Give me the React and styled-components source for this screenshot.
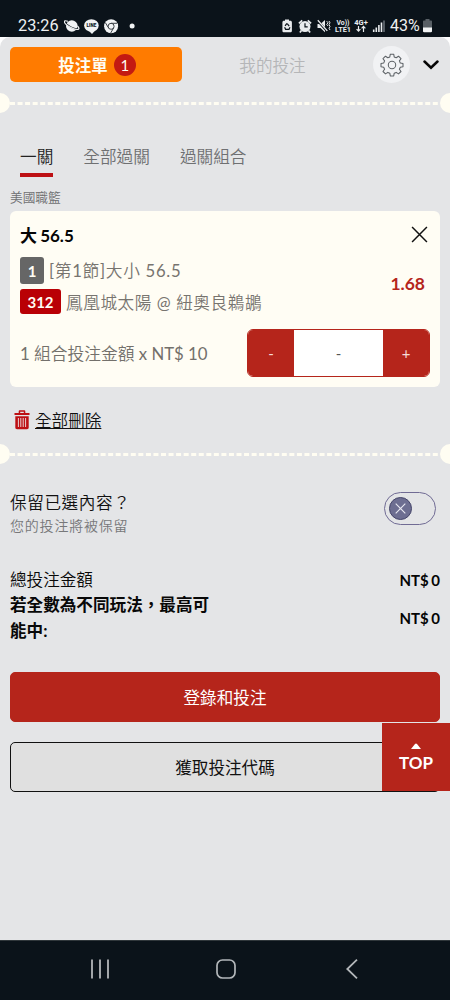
import React, { useState } from "react";
import styled, { createGlobalStyle } from "styled-components";

const tabs = ["一關", "全部過關", "過關組合"];

const totals = [
  { label: "總投注金額", value: "NT$ 0" },
  { label: "若全數為不同玩法，最高可能中:", value: "NT$ 0", bold: true },
];

function StatusIcons() {
  return (
    <svg width="71" height="16" viewBox="0 0 71 16">
      <g fill="#f1f3f4">
        <circle cx="7.8" cy="8" r="5.8" />
        <ellipse cx="27.4" cy="7.5" rx="7.3" ry="6.2" />
        <path d="M24 12l4 4 4-4.5z" />
        <circle cx="47.1" cy="8.3" r="7" />
        <circle cx="68.1" cy="8" r="2.5" />
      </g>
      <path
        d="M1.2 4.2c1.6 3.6 9 7.4 13 6.6"
        fill="none"
        stroke="#0b131a"
        strokeWidth="1.3"
      />
      <path
        d="M3.8 3.4C1.5 2.4.2 2.6.4 4c.5 2.5 9.6 8.2 13.6 7.4 1.5-.3 1-2-.6-3.5"
        fill="none"
        stroke="#f1f3f4"
        strokeWidth="1.2"
      />
      <text
        x="27.4"
        y="9.3"
        fontSize="4.6"
        fontWeight="900"
        textAnchor="middle"
        fill="#0b131a"
      >
        LINE
      </text>
      <g fill="none" stroke="#3c4247" strokeWidth="1">
        <circle cx="47.1" cy="8.3" r="3" />
        <path d="M47 5.3h6M44.4 9.7l-3-5M49.7 9.8l-3 5.2" />
      </g>
    </svg>
  );
}

function SystemIcons() {
  return (
    <svg width="104" height="16" viewBox="0 0 104 16">
      <g fill="#e9ecee">
        <path d="M3 1.4h4v1.4h1.3c1 0 1.6.7 1.6 1.6v8.3c0 1-.7 1.6-1.6 1.6H2c-1 0-1.6-.7-1.6-1.6V4.4C.4 3.5 1 2.8 2 2.8h1z" />
        <circle cx="23" cy="8.5" r="5.5" />
        <path d="M16.9 5.3l3.3-3M29.1 5.3l-3.3-3M19.4 12.4l-1.5 2M26.6 12.4l1.5 2" stroke="#e9ecee" strokeWidth="1.7" />
        <path d="M35.5 6h3l4.5-4v12.2L38.5 10h-3z" />
      </g>
      <path d="M35.8 2.8l9.5 10.7" stroke="#0b131a" strokeWidth="2.4" />
      <path d="M35.8 2.2l9.5 10.7" stroke="#e9ecee" strokeWidth="1.3" />
      <path d="M5.2 5.6l2 2.6M8 9.2l-1 2.1H3.6l-1-2.1M3.1 7.8l1.8-2.5" fill="none" stroke="#0b131a" strokeWidth="1.2" />
      <path d="M23 5.2v3.7h2.7" fill="none" stroke="#0b131a" strokeWidth="1.2" />
      <path d="M44.7 3.2l1.4 1.6-1.4 1.6 1.4 1.6M47 3l1 1.8L47 6.6l1 1.8-1 1.8 1 1.8" fill="none" stroke="#e9ecee" strokeWidth="1" />
      <g fill="#e9ecee" fontWeight="700">
        <text x="54.5" y="6.8" fontSize="7" textLength="13" lengthAdjust="spacingAndGlyphs">Vo))</text>
        <text x="53" y="14" fontSize="7" textLength="16" lengthAdjust="spacingAndGlyphs">LTE1</text>
        <text x="72.3" y="6.8" fontSize="7" textLength="13.5" lengthAdjust="spacingAndGlyphs">4G+</text>
      </g>
      <path d="M76.5 8v5M74.6 11.2l1.9 2 1.9-2M81.5 14V8.5M79.6 10.4l1.9-2 1.9 2" fill="none" stroke="#e9ecee" strokeWidth="1.2" />
      <g stroke="#e9ecee" strokeWidth="1.6">
        <path d="M91.7 14v-2.5M94.3 14V9.5M96.9 14V7M99.5 14V4.5" />
        <path d="M102 14V2.5" stroke="#687077" />
      </g>
    </svg>
  );
}

function BatteryIcon() {
  return (
    <svg width="9" height="14" viewBox="0 0 9 14">
      <path d="M2.5 0h4v1.5H8c.6 0 1 .4 1 1V9H0V2.5c0-.6.4-1 1-1h1.5z" fill="#596066" />
      <path d="M0 8.5h9V12c0 .8-.4 1.2-1 1.2H1c-.6 0-1-.4-1-1.2z" fill="#f1f3f4" />
    </svg>
  );
}

function GearIcon() {
  return (
    <svg width="24" height="24" viewBox="0 0 24 24" fill="none" stroke="#5d6266" strokeWidth="1.05" strokeLinejoin="round">
      <path d="M10.3 1.2h3.4l.5 2.7 2 .9 2.3-1.6L21 5.7l-1.6 2.2.9 2.1 2.7.4v3.3l-2.7.5-.9 2 1.6 2.3-2.5 2.4-2.3-1.5-2 .8-.5 2.7h-3.4l-.5-2.7-2-.8-2.3 1.5L3 18.5l1.6-2.3-.9-2-2.7-.5v-3.3l2.7-.4.9-2.1L3 5.7l2.5-2.5 2.3 1.6 2-.9z" />
      <circle cx="12" cy="12" r="3.7" />
    </svg>
  );
}

function TrashIcon() {
  return (
    <svg width="16" height="20" viewBox="0 0 16 20">
      <path d="M4.7 3V1.2C4.7.6 5.1.3 5.6.3h4.8c.5 0 .9.3.9.9V3h4.2v2H.5V3zM6.2 1.7V3h3.6V1.7z" fill="#bd1014" fillRule="evenodd" />
      <path d="M1.3 6.2h13.4v11.4c0 1-.7 1.7-1.7 1.7H3c-1 0-1.7-.7-1.7-1.7z" fill="#bd1014" />
      <path d="M4.4 8v9M6.8 8v9M9.2 8v9M11.6 8v9" stroke="#e8d2d4" strokeWidth="1" />
    </svg>
  );
}

function CrossIcon({ size, color, width }) {
  return (
    <svg width={size} height={size} viewBox="0 0 16 16">
      <path d="M1 1l14 14M15 1L1 15" stroke={color} strokeWidth={width} />
    </svg>
  );
}

function TicketDivider() {
  return (
    <Divider>
      <Notch />
      <svg width="430" height="3">
        <path d="M0 1.5h430" stroke="#fffdf2" strokeWidth="3" strokeDasharray="5 2.55" />
      </svg>
      <Notch $right />
    </Divider>
  );
}

export default function App() {
  const [activeTab, setActiveTab] = useState(0);

  return (
    <>
      <GlobalStyle />
      <Screen>
        <StatusBar>
          <Clock>23:26</Clock>
          <StatusIcons />
          <SystemGroup>
            <SystemIcons />
            <Percent>43%</Percent>
            <BatteryIcon />
          </SystemGroup>
        </StatusBar>

        <SlipPage>
          <SlipPanel>
            <SlipHeader>
              <SlipTab>
                投注單 <Count>1</Count>
              </SlipTab>
              <MyBets>我的投注</MyBets>
              <GearButton>
                <GearIcon />
              </GearButton>
              <svg width="16" height="10" viewBox="0 0 16 10">
                <path d="M1.5 1.5L8 7.7l6.5-6.2" fill="none" stroke="#050505" strokeWidth="2.5" strokeLinecap="round" />
              </svg>
            </SlipHeader>

            <TicketDivider />

            <Tabs>
              {tabs.map((tab, i) => (
                <Tab key={tab} $active={i === activeTab} onClick={() => setActiveTab(i)}>
                  {tab}
                </Tab>
              ))}
            </Tabs>

            <League>美國職籃</League>
            <BetCard>
              <CardHead>
                <Pick>大 56.5</Pick>
                <CrossIcon size={17} color="#111" width={1.4} />
              </CardHead>
              <CardBody>
                <div>
                  <Line>
                    <Badge>1</Badge>
                    <Market>[第1節]大小 56.5</Market>
                  </Line>
                  <Line $second>
                    <Badge $red>312</Badge>
                    <Teams>鳳凰城太陽 @ 紐奧良鵜鶘</Teams>
                  </Line>
                </div>
                <Odds>1.68</Odds>
              </CardBody>
              <StakeRow>
                <StakeText>1 組合投注金額 x NT$ 10</StakeText>
                <Stepper>
                  <StepButton>-</StepButton>
                  <StepValue>-</StepValue>
                  <StepButton>+</StepButton>
                </Stepper>
              </StakeRow>
            </BetCard>

            <DeleteAll>
              <TrashIcon />
              <span>全部刪除</span>
            </DeleteAll>

            <TicketDivider />

            <KeepRow>
              <div>
                <KeepTitle>保留已選內容？</KeepTitle>
                <KeepHint>您的投注將被保留</KeepHint>
              </div>
              <Toggle>
                <Thumb>
                  <CrossIcon size={11} color="#e9e9f2" width={1.6} />
                </Thumb>
              </Toggle>
            </KeepRow>

            <Totals>
              {totals.map((item) => (
                <TotalRow key={item.label}>
                  <TotalLabel $bold={item.bold}>{item.label}</TotalLabel>
                  <TotalValue>{item.value}</TotalValue>
                </TotalRow>
              ))}
            </Totals>

            <Actions>
              <ActionButton $primary>登錄和投注</ActionButton>
              <ActionButton>獲取投注代碼</ActionButton>
              <TopButton>
                <svg width="10" height="6" viewBox="0 0 10 6">
                  <path d="M0 6l4-5c.6-.8 1.4-.8 2 0l4 5z" fill="#fff" />
                </svg>
                TOP
              </TopButton>
            </Actions>
          </SlipPanel>
        </SlipPage>

        <NavBar>
          <svg width="20" height="20" viewBox="0 0 20 20">
            <path d="M2 .5v19M10 .5v19M18 .5v19" stroke="#b3b7ba" strokeWidth="1.8" />
          </svg>
          <svg width="20" height="20" viewBox="0 0 20 20">
            <rect x="1" y="1" width="18" height="18" rx="5.5" fill="none" stroke="#b3b7ba" strokeWidth="1.7" />
          </svg>
          <svg width="12" height="20" viewBox="0 0 12 20">
            <path d="M11 .7L1.3 10l9.7 9.3" fill="none" stroke="#b3b7ba" strokeWidth="1.8" />
          </svg>
        </NavBar>
      </Screen>
    </>
  );
}

const lightFont = `Lato, "Noto Sans CJK TC DemiLight", "Noto Sans CJK TC", sans-serif`;

const GlobalStyle = createGlobalStyle`
  * {
    box-sizing: border-box;
  }
  body {
    margin: 0;
    font-family: Lato, "Noto Sans CJK TC", sans-serif;
  }
  svg {
    display: block;
    flex-shrink: 0;
  }
  button {
    font-family: inherit;
    padding: 0;
    border: 0;
  }
`;

const Screen = styled.div`
  width: 450px;
  height: 1000px;
  display: flex;
  flex-direction: column;
  overflow: hidden;
`;

const StatusBar = styled.div`
  height: 37px;
  flex-shrink: 0;
  display: flex;
  align-items: flex-end;
  padding: 0 18px 3px;
  background: #0b131a;
  color: #eef0f1;
  font-family: Roboto, sans-serif;
`;

const Clock = styled.div`
  width: 46px;
  font-size: 16.3px;
  line-height: 16px;
`;

const SystemGroup = styled.div`
  display: flex;
  align-items: flex-end;
  margin-left: auto;
  > svg:last-child {
    margin-bottom: 1px;
  }
`;

const Percent = styled.div`
  width: 33px;
  margin-left: 4px;
  font-size: 16px;
  line-height: 16px;
`;

const SlipPage = styled.div`
  flex: 1;
  background: #fff;
`;

const SlipPanel = styled.div`
  height: 100%;
  border-radius: 10px 10px 0 0;
  background: #e4e5e7;
`;

const SlipHeader = styled.div`
  height: 56px;
  display: flex;
  align-items: center;
  padding: 0 11px 1px 10px;
`;

const SlipTab = styled.div`
  width: 172px;
  height: 35px;
  display: flex;
  align-items: center;
  justify-content: center;
  gap: 6px;
  padding-left: 2px;
  border-radius: 5px;
  background: #ff7b00;
  color: #fffdf2;
  font-size: 16.5px;
  font-weight: 700;
`;

const Count = styled.span`
  width: 22px;
  height: 22px;
  border-radius: 50%;
  background: #c31a12;
  font-size: 15px;
  font-weight: 400;
  line-height: 22px;
  text-align: center;
`;

const MyBets = styled.div`
  flex: 1;
  padding-right: 10px;
  text-align: center;
  color: #b5b6b8;
  font-family: ${lightFont};
  font-size: 16.6px;
`;

const GearButton = styled.div`
  width: 37px;
  height: 37px;
  display: flex;
  align-items: center;
  justify-content: center;
  margin-right: 13px;
  border-radius: 50%;
  background: #f1f2f4;
`;

const Divider = styled.div`
  height: 20px;
  display: flex;
  align-items: center;
`;

const Notch = styled.span`
  width: 10px;
  height: 20px;
  flex-shrink: 0;
  border-radius: ${(p) => (p.$right ? "10px 0 0 10px" : "0 10px 10px 0")};
  background: #fffdf2;
`;

const Tabs = styled.div`
  display: flex;
  gap: 30px;
  padding: 31px 20px 0;
`;

const Tab = styled.div`
  height: 33px;
  border-bottom: 4px solid ${(p) => (p.$active ? "#bd1014" : "transparent")};
  color: ${(p) => (p.$active ? "#222" : "#6f7072")};
  font-family: ${lightFont};
  font-size: 16.65px;
  line-height: 26px;
`;

const League = styled.div`
  height: 34px;
  padding: 10px 10px 0;
  color: #6f7072;
  font-family: ${lightFont};
  font-size: 12.7px;
  line-height: 20px;
`;

const BetCard = styled.div`
  height: 176px;
  margin: 0 10px;
  padding: 10px 10px 0;
  border-radius: 6px;
  background: #fffdf4;
`;

const CardHead = styled.div`
  height: 26px;
  display: flex;
  align-items: center;
  justify-content: space-between;
  padding-right: 2px;
`;

const Pick = styled.div`
  color: #050505;
  font-size: 17px;
  font-weight: 700;
  word-spacing: -1px;
`;

const CardBody = styled.div`
  height: 82px;
  display: flex;
  justify-content: space-between;
  padding: 10px 5px 0 0;
`;

const Line = styled.div`
  height: ${(p) => (p.$second ? 25 : 27)}px;
  display: flex;
  align-items: center;
  gap: 5px;
  margin-top: ${(p) => (p.$second ? 5 : 0)}px;
`;

const Badge = styled.span`
  width: ${(p) => (p.$red ? 41 : 24)}px;
  height: ${(p) => (p.$red ? 25 : 27)}px;
  display: flex;
  align-items: center;
  justify-content: center;
  border-radius: 3px;
  background: ${(p) => (p.$red ? "#b90005" : "#666")};
  color: #fffdf4;
  font-size: 15px;
  font-weight: 700;
`;

const Market = styled.span`
  padding-bottom: 2px;
  color: #77746f;
  font-family: ${lightFont};
  font-size: 16.7px;
  letter-spacing: 0.7px;
`;

const Teams = styled(Market)`
  padding-bottom: 0;
  font-size: 16.6px;
  letter-spacing: 0.6px;
`;

const Odds = styled.div`
  margin-top: 16px;
  color: #b5251b;
  font-size: 17.5px;
  font-weight: 700;
  line-height: 22px;
`;

const StakeRow = styled.div`
  display: flex;
  align-items: center;
  justify-content: space-between;
`;

const StakeText = styled.div`
  padding-bottom: 1px;
  color: #73706b;
  font-family: ${lightFont};
  font-size: 16.75px;
`;

const Stepper = styled.div`
  width: 183px;
  height: 48px;
  display: flex;
  border: 1px solid #b5251b;
  border-radius: 6px;
  overflow: hidden;
`;

const StepButton = styled.button`
  width: 46px;
  background: #b5251b;
  color: #f6dcd8;
  font-size: 15px;
`;

const StepValue = styled.div`
  flex: 1;
  background: #fff;
  color: #555;
  font-size: 15px;
  line-height: 46px;
  text-align: center;
`;

const DeleteAll = styled.div`
  height: 57px;
  display: flex;
  align-items: center;
  gap: 5px;
  padding: 9px 14px 0;
  color: #111;
  font-family: ${lightFont};
  font-size: 16.6px;
  span {
    text-decoration: underline;
  }
`;

const KeepRow = styled.div`
  height: 88px;
  display: flex;
  align-items: flex-start;
  justify-content: space-between;
  padding: 28px 14px 0 10px;
`;

const KeepTitle = styled.div`
  margin-top: -1px;
  color: #111;
  font-family: ${lightFont};
  font-size: 16.6px;
  line-height: 24px;
  letter-spacing: 0.6px;
`;

const KeepHint = styled.div`
  color: #77787a;
  font-family: ${lightFont};
  font-size: 14px;
  line-height: 22px;
  letter-spacing: 0.8px;
`;

const Toggle = styled.div`
  width: 52px;
  height: 33px;
  display: flex;
  align-items: center;
  padding-left: 4px;
  border: 1px solid #706b94;
  border-radius: 17px;
`;

const Thumb = styled.div`
  width: 23px;
  height: 23px;
  display: flex;
  align-items: center;
  justify-content: center;
  border: 1px solid #45456a;
  border-radius: 50%;
  background: #6d6e91;
`;

const Totals = styled.div`
  padding: 16px 10px 0;
`;

const TotalRow = styled.div`
  display: flex;
  align-items: center;
  justify-content: space-between;
`;

const TotalLabel = styled.div`
  width: 215px;
  color: #080808;
  font-family: ${(p) => (p.$bold ? "inherit" : lightFont)};
  font-size: 16.6px;
  font-weight: ${(p) => (p.$bold ? 700 : 400)};
  line-height: 25.4px;
`;

const TotalValue = styled.div`
  padding-bottom: 2px;
  color: #050505;
  font-size: 15px;
  font-weight: 700;
  word-spacing: -1px;
`;

const Actions = styled.div`
  position: relative;
  display: flex;
  flex-direction: column;
  gap: 20px;
  padding: 27.8px 10px 0;
`;

const ActionButton = styled.button`
  height: 50px;
  border: 1px solid ${(p) => (p.$primary ? "#b5251b" : "#111")};
  border-radius: 5px;
  background: ${(p) => (p.$primary ? "#b5251b" : "#e0e0e0")};
  color: ${(p) => (p.$primary ? "#fff" : "#111")};
  font-size: 16.6px;
`;

/* floats over the right end of the buttons */
const TopButton = styled.button`
  position: absolute;
  right: 0;
  bottom: 1px;
  width: 68px;
  height: 68px;
  display: flex;
  flex-direction: column;
  align-items: center;
  padding-top: 20px;
  gap: 4px;
  background: #b5251b;
  color: #fff;
  font-size: 17px;
  font-weight: 700;
  line-height: 20px;
`;

const NavBar = styled.div`
  height: 60px;
  flex-shrink: 0;
  display: flex;
  align-items: center;
  gap: 110px;
  padding: 0 0 3px 90px;
  border-top: 1px solid #30373b;
  background: #0b131a;

  svg:nth-child(2) {
    margin-left: -4px;
  }
`;
